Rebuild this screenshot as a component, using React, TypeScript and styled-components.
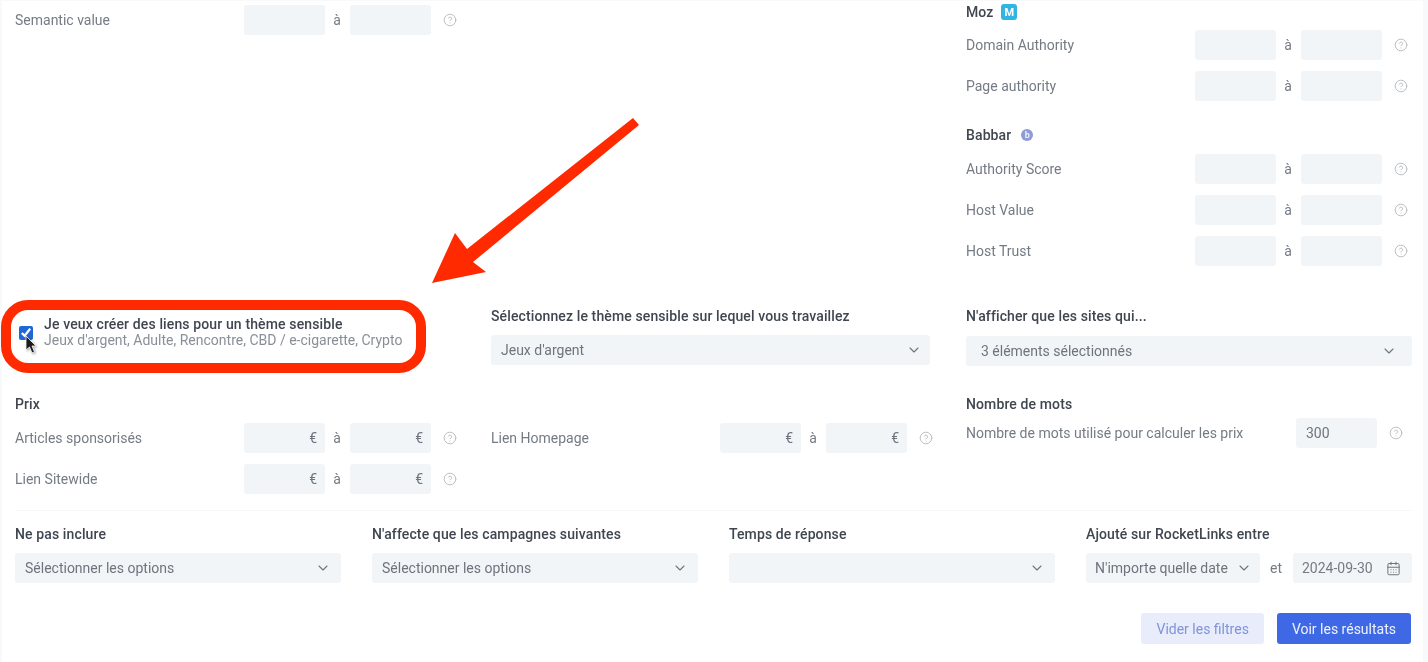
import React from "react";
import styled, { createGlobalStyle } from "styled-components";
import { CalendarDays, ChevronDown, CircleHelp } from "lucide-react";

const GlobalStyle = createGlobalStyle`
  html, body {
    margin: 0;
    height: 662px;
    overflow: hidden;
    background: #f7f9fb;
    font-family: Roboto, "Liberation Sans", sans-serif;
  }
`;

const Screen = styled.div`
  position: relative;
  width: 1428px;
  height: 662px;
  overflow: hidden;
`;

const Card = styled.div`
  box-sizing: border-box;
  width: 1421px;
  height: 661px;
  margin: 1px 0 0 2px;
  padding: 0 11px 0 13px;
  background: #fff;
  filter: blur(0.6px);
`;

const TopGrid = styled.div`
  display: grid;
  grid-template-columns: 476px 475px 1fr;
`;

const Column = styled.div<{ $top?: number }>`
  display: flex;
  flex-direction: column;
  padding-top: ${(p) => p.$top ?? 0}px;
`;

const Heading = styled.div<{ $mt?: number; $mb?: number }>`
  display: flex;
  align-items: center;
  gap: 8px;
  height: 20px;
  margin-top: ${(p) => p.$mt ?? 0}px;
  margin-bottom: ${(p) => p.$mb ?? 9}px;
  font-size: 14px;
  font-weight: 500;
  letter-spacing: 0.12px;
  color: #3f4650;
  white-space: nowrap;
`;

const Row = styled.div<{ $mb?: number }>`
  display: flex;
  align-items: center;
  height: 30px;
  margin-bottom: ${(p) => p.$mb ?? 11}px;
`;

const Label = styled.div<{ $w?: number }>`
  width: ${(p) => p.$w ?? 229}px;
  flex: none;
  font-size: 14px;
  color: #757b84;
  white-space: nowrap;
`;

const Input = styled.div<{ $w?: number; $text?: boolean }>`
  box-sizing: border-box;
  display: flex;
  align-items: center;
  justify-content: ${(p) => (p.$text ? "flex-start" : "flex-end")};
  width: ${(p) => p.$w ?? 81}px;
  height: 30px;
  padding: 0 ${(p) => (p.$text ? 0 : 8)}px 0 ${(p) => (p.$text ? 10 : 0)}px;
  flex: none;
  border-radius: 3px;
  background: #f2f5f8;
  font-size: 14px;
  color: #6e747d;
`;

const Sep = styled.div<{ $w?: number }>`
  width: ${(p) => p.$w ?? 24}px;
  margin-right: 1px;
  flex: none;
  text-align: center;
  font-size: 14px;
  color: #757b84;
`;

const Help = styled(CircleHelp)`
  flex: none;
  width: 14px;
  height: 14px;
  margin-left: 12px;
  color: #b4b8bd;
  stroke-width: 1.5;
`;

const MozBadge = styled.span`
  display: inline-flex;
  align-items: center;
  justify-content: center;
  width: 16px;
  height: 16px;
  border-radius: 3px;
  background: #2fb4e4;
  color: #fff;
  font-size: 11px;
  font-weight: 700;
`;

const BabbarBadge = styled.span`
  display: inline-flex;
  align-items: center;
  justify-content: center;
  width: 12px;
  height: 12px;
  margin-left: 2px;
  border-radius: 50%;
  background: #8d9bd6;
  color: #eef1fb;
  font-size: 9px;
  font-weight: 700;
`;

const MiddleGrid = styled(TopGrid)`
  margin-top: 40px;
  height: 88px;
`;

const SelectBox = styled.div<{ $w?: number; $pl?: number; $pr?: number }>`
  box-sizing: border-box;
  display: flex;
  align-items: center;
  justify-content: space-between;
  width: ${(p) => (p.$w ? `${p.$w}px` : "100%")};
  height: 30px;
  padding: 0 ${(p) => p.$pr ?? 10}px 0 ${(p) => p.$pl ?? 10}px;
  flex: none;
  border-radius: 3px;
  background: #f2f5f8;
  font-size: 14px;
  color: #6e747d;
  white-space: nowrap;
  svg {
    width: 16px;
    height: 16px;
    flex: none;
    color: #6e747d;
    stroke-width: 1.6;
  }
`;

const Sensitive = styled.label`
  display: flex;
  align-items: flex-start;
  gap: 11px;
  padding: 10px 0 0 4px;
`;

const Check = styled.input`
  width: 14px;
  height: 14px;
  margin: 10px 0 0;
  accent-color: #1f66d6;
`;

const SensitiveText = styled.div`
  display: flex;
  flex-direction: column;
  font-size: 14px;
  line-height: 16px;
  color: #8a8f97;
  white-space: nowrap;
  b {
    font-weight: 500;
    letter-spacing: 0.13px;
    color: #3f4650;
  }
`;

const PriceGrid = styled(TopGrid)`
  height: 116px;
  border-bottom: 1px solid #f6f7f9;
`;

const Filters = styled.div`
  display: grid;
  grid-template-columns: repeat(4, 326px);
  column-gap: 31px;
  padding-top: 13px;
`;

const DateRow = styled.div`
  display: flex;
  align-items: center;
`;

const DateInput = styled(SelectBox)`
  color: #757b84;
  svg {
    width: 15px;
    height: 15px;
  }
`;

const Footer = styled.div`
  display: flex;
  justify-content: flex-end;
  gap: 13px;
  padding: 30px 1px 0 0;
`;

const Button = styled.button<{ $primary?: boolean }>`
  height: 31px;
  padding: 0 15px;
  border: none;
  border-radius: 3px;
  background: ${(p) => (p.$primary ? "#3f68e4" : "#e9edfb")};
  color: ${(p) => (p.$primary ? "#eef2ff" : "#7f93d8")};
  font-family: inherit;
  font-size: 14px;
`;

const Highlight = styled.div`
  position: absolute;
  left: 1px;
  top: 300px;
  box-sizing: border-box;
  width: 425px;
  height: 73px;
  border: 10px solid #ff2a00;
  border-radius: 27px;
`;

const ArrowSvg = styled.svg`
  position: absolute;
  left: 0;
  top: 0;
  pointer-events: none;
`;

const Pointer = styled.svg`
  position: absolute;
  left: 25px;
  top: 335px;
  filter: drop-shadow(1px 1px 1px rgba(0, 0, 0, 0.35));
`;

type RangeProps = { label: string; unit?: string; mb?: number };

const Range = ({ label, unit, mb }: RangeProps) => (
  <Row $mb={mb}>
    <Label>{label}</Label>
    <Input>{unit}</Input>
    <Sep>à</Sep>
    <Input>{unit}</Input>
    <Help />
  </Row>
);

const App = () => {
  return (
    <Screen>
      <GlobalStyle />
      <Card>
        <TopGrid>
          <Column $top={4}>
            <Range label="Semantic value" />
          </Column>
          <div />
          <Column $top={1}>
            <Heading $mb={8}>
              Moz <MozBadge>M</MozBadge>
            </Heading>
            <Range label="Domain Authority" />
            <Range label="Page authority" mb={0} />
            <Heading $mt={24}>
              Babbar <BabbarBadge>b</BabbarBadge>
            </Heading>
            <Range label="Authority Score" />
            <Range label="Host Value" />
            <Range label="Host Trust" mb={0} />
          </Column>
        </TopGrid>

        <MiddleGrid>
          <Sensitive>
            <Check type="checkbox" checked readOnly />
            <SensitiveText>
              <b>Je veux créer des liens pour un thème sensible</b>
              <span>Jeux d'argent, Adulte, Rencontre, CBD / e-cigarette, Crypto</span>
            </SensitiveText>
          </Sensitive>
          <Column>
            <Heading>Sélectionnez le thème sensible sur lequel vous travaillez</Heading>
            <SelectBox $w={439} $pr={8}>
              Jeux d'argent <ChevronDown />
            </SelectBox>
          </Column>
          <Column>
            <Heading $mb={10}>N'afficher que les sites qui...</Heading>
            <SelectBox $pl={15} $pr={15}>
              3 éléments sélectionnés <ChevronDown />
            </SelectBox>
          </Column>
        </MiddleGrid>

        <PriceGrid>
          <Column>
            <Heading>Prix</Heading>
            <Range label="Articles sponsorisés" unit="€" />
            <Range label="Lien Sitewide" unit="€" mb={0} />
          </Column>
          <Column $top={29}>
            <Range label="Lien Homepage" unit="€" />
          </Column>
          <Column>
            <Heading $mb={4}>Nombre de mots</Heading>
            <Row>
              <Label $w={330}>Nombre de mots utilisé pour calculer les prix</Label>
              <Input $w={81} $text>
                300
              </Input>
              <Help />
            </Row>
          </Column>
        </PriceGrid>

        <Filters>
          <Column>
            <Heading>Ne pas inclure</Heading>
            <SelectBox>
              Sélectionner les options <ChevronDown />
            </SelectBox>
          </Column>
          <Column>
            <Heading>N'affecte que les campagnes suivantes</Heading>
            <SelectBox>
              Sélectionner les options <ChevronDown />
            </SelectBox>
          </Column>
          <Column>
            <Heading>Temps de réponse</Heading>
            <SelectBox>
              <span />
              <ChevronDown />
            </SelectBox>
          </Column>
          <Column>
            <Heading>Ajouté sur RocketLinks entre</Heading>
            <DateRow>
              <SelectBox $w={174} $pl={9} $pr={8}>
                N'importe quelle date <ChevronDown />
              </SelectBox>
              <Sep $w={32}>et</Sep>
              <DateInput $w={119} $pl={9} $pr={11}>
                2024-09-30 <CalendarDays />
              </DateInput>
            </DateRow>
          </Column>
        </Filters>

        <Footer>
          <Button>Vider les filtres</Button>
          <Button $primary>Voir les résultats</Button>
        </Footer>
      </Card>

      <ArrowSvg width="1428" height="662" viewBox="0 0 1428 662">
        <polygon fill="#ff2a00" points="633,118 639,125 473,262 486,272 432,283 455,233 467,249" />
      </ArrowSvg>
      <Highlight />
      <Pointer width="12" height="19" viewBox="0 0 12 19">
        <path d="M1 1v14l3.5-3 2.5 6 2.5-1-2.5-6H11z" fill="#1b1b1f" stroke="#fff" strokeWidth="0.8" />
      </Pointer>
    </Screen>
  );
};

export default App;
